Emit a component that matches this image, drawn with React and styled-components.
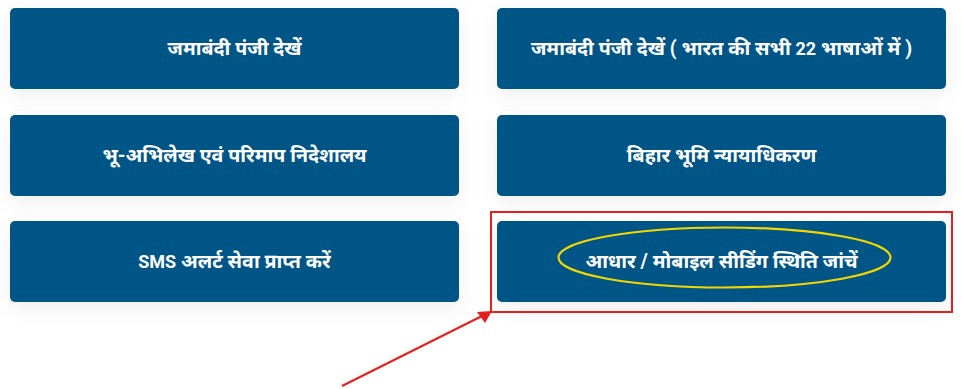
import React from 'react';
import styled, { createGlobalStyle } from 'styled-components';

const GlobalStyle = createGlobalStyle`
  html, body {
    margin: 0;
    padding: 0;
    background: #ffffff;
  }
`;

const links = [
  'जमाबंदी पंजी देखें',
  'जमाबंदी पंजी देखें ( भारत की सभी 22 भाषाओं में )',
  'भू-अभिलेख एवं परिमाप निदेशालय',
  'बिहार भूमि न्यायाधिकरण',
  'SMS अलर्ट सेवा प्राप्त करें',
  'आधार / मोबाइल सीडिंग स्थिति जांचें',
];

// latin letters and digits are set a bit smaller than the devanagari
const Label = ({ text }) =>
  text.split(/([A-Za-z0-9]+)/).map((part, i) =>
    /^[A-Za-z0-9]+$/.test(part) ? <Latin key={i}>{part}</Latin> : part
  );

const App = () => {
  return (
    <>
      <GlobalStyle />
      <Page>
        <Grid>
          {links.map((label) => (
            <LinkButton key={label} href="#">
              <span>
                <Label text={label} />
              </span>
            </LinkButton>
          ))}
        </Grid>

        {/* annotation drawn over the screenshot */}
        <Marks width="962" height="389" viewBox="0 0 962 389">
          <rect x="491" y="212" width="461" height="100" fill="none" stroke="#e3201f" strokeWidth="2" />
          <ellipse cx="724.5" cy="257.5" rx="166" ry="30" fill="none" stroke="#f2d600" strokeWidth="2.2" />
          <line x1="342" y1="386" x2="482" y2="316" stroke="#e3201f" strokeWidth="2.2" />
          <polygon points="492,311 477,312 485,323" fill="#e3201f" />
        </Marks>
      </Page>
    </>
  );
};

const Page = styled.div`
  position: relative;
  width: 962px;
  height: 389px;
  overflow: hidden;
  padding: 8px 16px 0 10px;
  box-sizing: border-box;
  font-family: Roboto, 'Noto Sans', sans-serif;
`;

const Grid = styled.div`
  display: grid;
  grid-template-columns: 449px 449px;
  column-gap: 38px;
  row-gap: 25.5px;
`;

const LinkButton = styled.a`
  box-sizing: border-box;
  display: flex;
  align-items: center;
  justify-content: center;
  height: 81px;
  padding: 0 12px 2px;
  background: #005587;
  border-radius: 5px;
  color: #ffffff;
  text-decoration: none;
  font-size: 19.6px;
  font-weight: 700;
  text-align: center;
  box-shadow: 0 6px 22px rgba(0, 0, 0, 0.07);
`;

const Latin = styled.span`
  font-size: 18px;
`;

const Marks = styled.svg`
  position: absolute;
  left: 0;
  top: 0;
  pointer-events: none;
`;

export default App;
